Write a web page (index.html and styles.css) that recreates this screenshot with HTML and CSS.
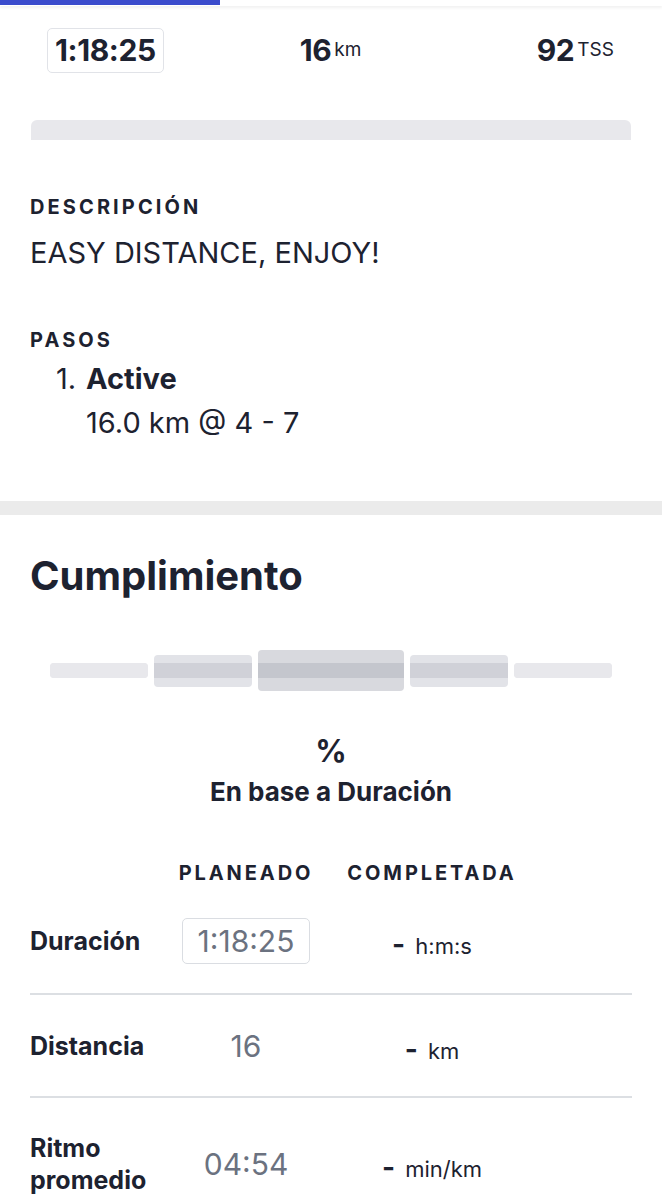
FILE: index.html
```html
<!DOCTYPE html>
<html>
<head>
    <title>Entrenamiento</title>
    <link rel="stylesheet" href="styles.css">
</head>
<body>
    <div class="tabbar"><div class="tab-indicator"></div></div>

    <div class="summary">
        <div class="stat stat-time"><span class="stat-value">1:18:25</span></div>
        <div class="stat stat-center"><span class="stat-value">16</span><span class="stat-unit">km</span></div>
        <div class="stat stat-end"><span class="stat-value">92</span><span class="stat-unit">TSS</span></div>
    </div>

    <div class="chart-stub"></div>

    <section class="details">
        <h3 class="label">DESCRIPCIÓN</h3>
        <p class="description">EASY DISTANCE, ENJOY!</p>

        <h3 class="label label-steps">PASOS</h3>
        <div class="step">
            <span class="step-num">1.</span>
            <div class="step-body">
                <strong>Active</strong>
                <div>16.0 km @ 4 - 7</div>
            </div>
        </div>
    </section>

    <div class="band"></div>

    <section class="compliance">
        <h2>Cumplimiento</h2>

        <div class="zones">
            <div class="zone zone-1"><div class="zone-core"></div></div>
            <div class="zone zone-2"><div class="zone-core"></div></div>
            <div class="zone zone-3"><div class="zone-core"></div></div>
            <div class="zone zone-2"><div class="zone-core"></div></div>
            <div class="zone zone-1"><div class="zone-core"></div></div>
        </div>

        <div class="score">
            <div class="score-pct">%</div>
            <div class="score-basis">En base a Duración</div>
        </div>

        <div class="metrics">
            <div class="metrics-head">
                <span></span>
                <span>PLANEADO</span>
                <span>COMPLETADA</span>
            </div>
            <div class="metric">
                <span class="metric-name">Duración</span>
                <span class="metric-plan"><span class="plan-box">1:18:25</span></span>
                <span class="metric-done"><b>-</b> h:m:s</span>
            </div>
            <div class="metric">
                <span class="metric-name">Distancia</span>
                <span class="metric-plan">16</span>
                <span class="metric-done"><b>-</b> km</span>
            </div>
            <div class="metric metric-last">
                <span class="metric-name">Ritmo promedio</span>
                <span class="metric-plan">04:54</span>
                <span class="metric-done"><b>-</b> min/km</span>
            </div>
        </div>
    </section>
</body>
</html>
```

FILE: styles.css
```css
body {
    font-family: Inter, "Noto Sans", sans-serif;
    color: #1d2230;
    background-color: #ffffff;
    margin: 0;
    padding: 0;
}

.tabbar {
    height: 6px;
    background-color: #ffffff;
    box-shadow: 0 2px 3px rgba(0, 0, 0, 0.06);
}

.tab-indicator {
    width: 220px;
    height: 5px;
    background-color: #3a4bcc;
}

.summary {
    display: grid;
    grid-template-columns: 1fr 1fr 1fr;
    align-items: start;
    margin: 22px 48px 0 47px;
}

.stat {
    display: flex;
    align-items: flex-start;
}

.stat-center {
    justify-self: center;
}

.stat-end {
    justify-self: end;
}

.stat-time {
    justify-self: start;
    border: 1px solid #e1e3e8;
    border-radius: 5px;
    padding: 6px 7px;
}

.stat-value {
    font-size: 30px;
    font-weight: 700;
    line-height: 31px;
    letter-spacing: -0.4px;
}

.stat-center .stat-value,
.stat-end .stat-value {
    margin-top: 7px;
}

.stat-unit {
    font-size: 19px;
    font-weight: 400;
    line-height: 19px;
    margin-left: 3px;
    margin-top: 12px;
}

.chart-stub {
    height: 20px;
    margin: 47px 31px 0;
    background-color: #e8e8ec;
    border-radius: 6px 6px 0 0;
}

.details {
    padding: 55px 30px 0;
}

.label {
    font-size: 20px;
    font-weight: 700;
    letter-spacing: 3.1px;
    margin: 0;
    line-height: 24px;
}

.description {
    font-size: 29px;
    font-weight: 400;
    margin: 16px 0 0;
    line-height: 36px;
}

.label-steps {
    margin-top: 57px;
}

.step {
    display: flex;
    font-size: 29px;
    line-height: 44px;
    padding-left: 26px;
    margin-top: 5px;
}

.step-num {
    width: 30px;
}

.step-body strong {
    font-weight: 700;
}

.band {
    height: 14px;
    margin-top: 56px;
    background-color: #ebebeb;
}

.compliance {
    padding: 0 30px;
}

.compliance h2 {
    font-size: 40px;
    font-weight: 700;
    margin: 37px 0 0;
    line-height: 48px;
}

.zones {
    display: flex;
    align-items: center;
    gap: 6px;
    margin: 50px 20px 0;
    height: 41px;
}

.zone {
    display: flex;
    align-items: center;
    width: 98px;
    border-radius: 4px;
}

.zone-core {
    width: 100%;
    height: 15px;
}

.zone-1 {
    height: 15px;
    background-color: #e8e8ec;
}

.zone-1 .zone-core {
    background-color: #e8e8ec;
    border-radius: 4px;
}

.zone-2 {
    height: 32px;
    background-color: #e2e3e8;
}

.zone-2 .zone-core {
    background-color: #d0d1d8;
}

.zone-3 {
    width: 146px;
    height: 41px;
    background-color: #d8d9de;
}

.zone-3 .zone-core {
    background-color: #c4c6cd;
}

.score {
    text-align: center;
    margin-top: 42px;
}

.score-pct {
    font-size: 31px;
    font-weight: 700;
    line-height: 36px;
}

.score-basis {
    font-size: 26px;
    font-weight: 700;
    line-height: 32px;
    margin-top: 7px;
}

.metrics {
    margin-top: 53px;
}

.metrics-head,
.metric {
    display: grid;
    grid-template-columns: 116px 136px 172px;
    column-gap: 32px;
    align-items: center;
}

.metrics-head span {
    text-align: center;
    font-size: 20px;
    font-weight: 700;
    letter-spacing: 2.9px;
    line-height: 24px;
}

.metric {
    min-height: 101px;
    border-bottom: 2px solid #dcdfe3;
}

.metrics-head + .metric {
    min-height: 104px;
    margin-top: 4px;
}

.metric-last {
    min-height: 132px;
    border-bottom: none;
}

.metric-name {
    font-size: 25px;
    font-weight: 700;
    line-height: 32px;
}

.metric-plan {
    text-align: center;
    font-size: 30px;
    color: #6b7280;
}

.plan-box {
    display: inline-block;
    border: 1px solid #dadde2;
    border-radius: 5px;
    padding: 5px 15px;
    line-height: 34px;
}

.metric-done {
    text-align: center;
    font-size: 22px;
    padding-top: 6px;
}

.metric-done b {
    font-size: 28px;
    margin-right: 4px;
}
```
